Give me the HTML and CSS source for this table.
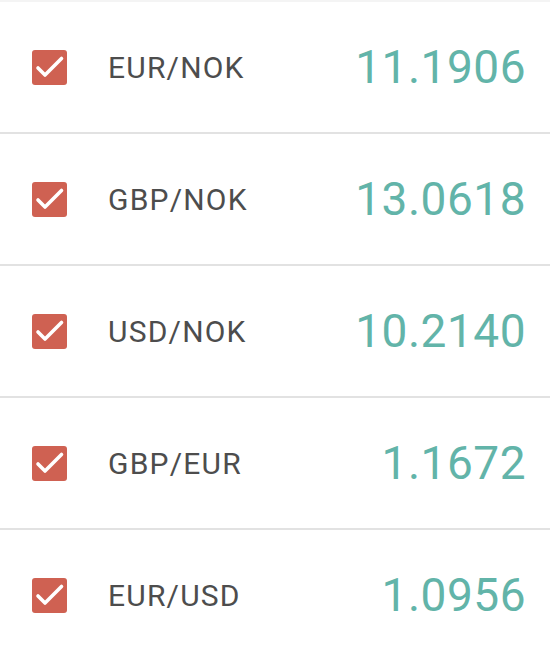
FILE: index.html
```html
<!DOCTYPE html>
<html>
<head>
<meta charset="utf-8">
<link rel="stylesheet" href="styles.css">
</head>
<body>
<ul class="rates">
  <li class="rate">
    <span class="check"><svg viewBox="0 0 35 35" width="35" height="35"><path d="M6 18 L13 25 L29.5 8.5" fill="none" stroke="#fff" stroke-width="3.6" stroke-linecap="round" stroke-linejoin="round"/></svg></span>
    <span class="pair">EUR/NOK</span>
    <span class="value">11.1906</span>
  </li>
  <li class="rate">
    <span class="check"><svg viewBox="0 0 35 35" width="35" height="35"><path d="M6 18 L13 25 L29.5 8.5" fill="none" stroke="#fff" stroke-width="3.6" stroke-linecap="round" stroke-linejoin="round"/></svg></span>
    <span class="pair">GBP/NOK</span>
    <span class="value">13.0618</span>
  </li>
  <li class="rate">
    <span class="check"><svg viewBox="0 0 35 35" width="35" height="35"><path d="M6 18 L13 25 L29.5 8.5" fill="none" stroke="#fff" stroke-width="3.6" stroke-linecap="round" stroke-linejoin="round"/></svg></span>
    <span class="pair">USD/NOK</span>
    <span class="value">10.2140</span>
  </li>
  <li class="rate">
    <span class="check"><svg viewBox="0 0 35 35" width="35" height="35"><path d="M6 18 L13 25 L29.5 8.5" fill="none" stroke="#fff" stroke-width="3.6" stroke-linecap="round" stroke-linejoin="round"/></svg></span>
    <span class="pair">GBP/EUR</span>
    <span class="value">1.1672</span>
  </li>
  <li class="rate">
    <span class="check"><svg viewBox="0 0 35 35" width="35" height="35"><path d="M6 18 L13 25 L29.5 8.5" fill="none" stroke="#fff" stroke-width="3.6" stroke-linecap="round" stroke-linejoin="round"/></svg></span>
    <span class="pair">EUR/USD</span>
    <span class="value">1.0956</span>
  </li>
</ul>
</body>
</html>
```
FILE: styles.css
```css
html, body {
  margin: 0;
  padding: 0;
  background: #ffffff;
  font-family: Roboto, "Noto Sans", sans-serif;
}
.rates {
  list-style: none;
  margin: 0;
  padding: 0;
  border-top: 2px solid #f4f4f4;
}
.rate {
  display: flex;
  align-items: center;
  height: 130px;
  border-bottom: 2px solid #e2e2e2;
  padding: 0 24px 0 32px;
}
.check {
  width: 35px;
  height: 35px;
  border-radius: 3px;
  background: #cf6152;
  display: flex;
  flex: none;
}
.pair {
  margin-left: 41px;
  font-size: 30px;
  color: #4d4d4d;
  letter-spacing: 1.2px;
  flex: 1;
}
.value {
  font-size: 46px;
  color: #62b4a9;
  letter-spacing: 0.5px;
}
```
